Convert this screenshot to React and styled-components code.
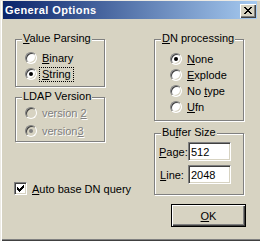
import React from 'react';
import styled, { createGlobalStyle } from 'styled-components';

const FACE = '#d7d3c2';

const GlobalStyle = createGlobalStyle`
  html, body {
    margin: 0;
    padding: 0;
    background: ${FACE};
  }
  body {
    font-family: "Liberation Sans", Arial, sans-serif;
    font-size: 11px;
    color: #000;
  }
`;

const Window = styled.div`
  box-sizing: border-box;
  width: 260px;
  height: 241px;
  padding: 1px 3px 2px 3px;
  display: flex;
  flex-direction: column;
  background: ${FACE};
  box-shadow: inset 0 1px 0 #eceae4, inset 1px 0 0 #eceae4, inset 2px 0 0 #fff,
    inset 0 -1px 0 #404040, inset 0 -2px 0 #808080;
`;

const TitleBar = styled.div`
  height: 18px;
  flex: none;
  display: flex;
  align-items: center;
  justify-content: space-between;
  padding: 0 1px 0 2px;
  background: linear-gradient(to right, #0a246a, #a6caf0);
`;

const TitleText = styled.span`
  color: #fff;
  font-weight: bold;
  font-size: 11px;
  letter-spacing: 0.4px;
  white-space: nowrap;
`;

const CloseButton = styled.span`
  box-sizing: border-box;
  width: 16px;
  height: 14px;
  margin-top: 1px;
  display: flex;
  align-items: center;
  justify-content: center;
  background: ${FACE};
  box-shadow: inset 1px 1px 0 #fff, inset -1px -1px 0 #404040, inset -2px -2px 0 #808080;
`;

const Body = styled.div`
  flex: 1;
  display: grid;
  grid-template-columns: 90px 92px;
  column-gap: 49px;
  align-items: start;
  padding: 20px 0 0 12px;
`;

const Column = styled.div`
  display: flex;
  flex-direction: column;
  align-items: flex-start;
`;

const GroupBox = styled.div`
  position: relative;
  box-sizing: border-box;
  width: 90px;
  height: ${({ $height }) => $height}px;
  margin-top: ${({ $mt }) => $mt || 0}px;
  padding: ${({ $pad }) => $pad};
  display: flex;
  flex-direction: column;
  gap: ${({ $gap }) => $gap || 0}px;
  border: 1px solid #808080;
  box-shadow: 1px 1px 0 #fff, inset 1px 1px 0 #fff;
`;

const GroupLabel = styled.span`
  position: absolute;
  top: -8px;
  left: 6px;
  padding: 0 1px;
  line-height: 13px;
  background: ${FACE};
  white-space: nowrap;
`;

const RadioRow = styled.div`
  display: flex;
  align-items: center;
  gap: 5px;
  height: 16px;
  white-space: nowrap;
`;

const Radio = styled.span`
  position: relative;
  flex: none;
  box-sizing: border-box;
  width: 12px;
  height: 12px;
  border-radius: 50%;
  border: 1px solid;
  border-color: #808080 #fff #fff #808080;
  background: ${({ $disabled }) => ($disabled ? FACE : '#fff')};
  box-shadow: inset 1px 1px 0 #404040, inset -1px -1px 0 ${FACE};

  &::after {
    content: '';
    display: ${({ $checked }) => ($checked ? 'block' : 'none')};
    position: absolute;
    left: 3px;
    top: 3px;
    width: 4px;
    height: 4px;
    border-radius: 50%;
    background: ${({ $disabled }) => ($disabled ? '#808080' : '#000')};
  }
`;

const OptionText = styled.span`
  color: ${({ $disabled }) => ($disabled ? '#808080' : '#000')};
  text-shadow: ${({ $disabled }) => ($disabled ? '1px 1px 0 #fff' : 'none')};
`;

const FocusText = styled.span`
  display: inline-block;
  line-height: 12px;
  padding: 0 2px 1px;
  margin-left: -2px;
  outline: 1px dotted #000;
`;

const CheckRow = styled.div`
  display: flex;
  align-items: center;
  gap: 5px;
  margin: 40px 0 0 -1px;
  white-space: nowrap;
`;

const CheckBox = styled.span`
  box-sizing: border-box;
  flex: none;
  width: 13px;
  height: 13px;
  display: flex;
  align-items: center;
  justify-content: center;
  background: #fff;
  border: 1px solid;
  border-color: #808080 #fff #fff #808080;
  box-shadow: inset 1px 1px 0 #404040, inset -1px -1px 0 ${FACE};
`;

const FieldGrid = styled.div`
  display: grid;
  grid-template-columns: 29px 43px;
  row-gap: 4px;
  align-items: center;
`;

const FieldLabel = styled.label`
  text-align: center;
  padding-right: 3px;
  white-space: nowrap;
`;

const EditBox = styled.input`
  box-sizing: border-box;
  width: 43px;
  height: 19px;
  margin: 0;
  padding: 0 0 0 2px;
  font-family: inherit;
  font-size: 11px;
  color: #000;
  background: #fff;
  border: 1px solid;
  border-color: #808080 #fff #fff #808080;
  box-shadow: inset 1px 1px 0 #404040, inset -1px -1px 0 ${FACE};
  outline: none;
`;

const DefaultButton = styled.button`
  box-sizing: border-box;
  width: 75px;
  height: 23px;
  margin: 9px 0 0 17px;
  padding: 0;
  font-family: inherit;
  font-size: 11px;
  color: #000;
  background: ${FACE};
  border: 1px solid #000;
  box-shadow: inset 1px 1px 0 #fff, inset -1px -1px 0 #404040, inset -2px -2px 0 #808080;
`;

const CloseGlyph = () => (
  <svg width="8" height="7" viewBox="0 0 8 7" shapeRendering="crispEdges">
    <path
      fill="#000"
      d="M0 0h2v1h-2zM6 0h2v1h-2zM1 1h2v1h-2zM5 1h2v1h-2zM2 2h4v1h-4zM3 3h2v1h-2zM2 4h4v1h-4zM1 5h2v1h-2zM5 5h2v1h-2zM0 6h2v1h-2zM6 6h2v1h-2z"
    />
  </svg>
);

const CheckGlyph = () => (
  <svg width="7" height="7" viewBox="0 0 7 7" shapeRendering="crispEdges">
    <path
      fill="#000"
      d="M0 2h1v3h-1zM1 3h1v3h-1zM2 4h1v3h-1zM3 3h1v3h-1zM4 2h1v3h-1zM5 1h1v3h-1zM6 0h1v3h-1z"
    />
  </svg>
);

const RadioOption = ({ checked, disabled, focused, children }) => (
  <RadioRow>
    <Radio $checked={checked} $disabled={disabled} />
    <OptionText $disabled={disabled}>
      {focused ? <FocusText>{children}</FocusText> : children}
    </OptionText>
  </RadioRow>
);

const App = () => {
  return (
    <>
      <GlobalStyle />
      <Window>
        <TitleBar>
          <TitleText>General Options</TitleText>
          <CloseButton>
            <CloseGlyph />
          </CloseButton>
        </TitleBar>
        <Body>
          <Column>
            <GroupBox $height={48} $pad="10px 0 0 9px">
              <GroupLabel><u>V</u>alue Parsing</GroupLabel>
              <RadioOption><u>B</u>inary</RadioOption>
              <RadioOption checked focused><u>S</u>tring</RadioOption>
            </GroupBox>
            <GroupBox $height={45} $mt={10} $pad="7px 0 0 9px" $gap={2}>
              <GroupLabel>LDAP Version</GroupLabel>
              <RadioOption disabled>version <u>2</u></RadioOption>
              <RadioOption checked disabled>version<u>3</u></RadioOption>
            </GroupBox>
            <CheckRow>
              <CheckBox>
                <CheckGlyph />
              </CheckBox>
              <span><u>A</u>uto base DN query</span>
            </CheckRow>
          </Column>
          <Column>
            <GroupBox $height={82} $pad="11px 0 0 15px">
              <GroupLabel><u>D</u>N processing</GroupLabel>
              <RadioOption checked><u>N</u>one</RadioOption>
              <RadioOption><u>E</u>xplode</RadioOption>
              <RadioOption>No <u>t</u>ype</RadioOption>
              <RadioOption><u>U</u>fn</RadioOption>
            </GroupBox>
            <GroupBox $height={62} $mt={12} $pad="8px 0 0 4px">
              <GroupLabel>Bu<u>f</u>fer Size</GroupLabel>
              <FieldGrid>
                <FieldLabel htmlFor="page"><u>P</u>age:</FieldLabel>
                <EditBox id="page" readOnly defaultValue="512" />
                <FieldLabel htmlFor="line"><u>L</u>ine:</FieldLabel>
                <EditBox id="line" readOnly defaultValue="2048" />
              </FieldGrid>
            </GroupBox>
            <DefaultButton><u>O</u>K</DefaultButton>
          </Column>
        </Body>
      </Window>
    </>
  );
};

export default App;
